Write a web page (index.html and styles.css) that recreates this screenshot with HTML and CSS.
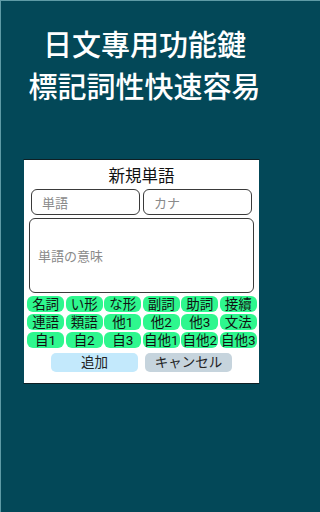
FILE: index.html
```html
<!DOCTYPE html>
<html lang="ja">
<head>
<meta charset="utf-8">
<link rel="stylesheet" href="styles.css">
</head>
<body>
<div class="screen">
  <header class="headline">
    <div class="line">日文專用功能鍵</div>
    <div class="line">標記詞性快速容易</div>
  </header>
  <section class="card">
    <div class="card-title">新規単語</div>
    <div class="field-row">
      <div class="field">単語</div>
      <div class="field">カナ</div>
    </div>
    <div class="field meaning">単語の意味</div>
    <div class="chips">
      <span class="chip">名詞</span><span class="chip">い形</span><span class="chip">な形</span><span class="chip">副詞</span><span class="chip">助詞</span><span class="chip">接續</span>
      <span class="chip">連語</span><span class="chip">類語</span><span class="chip">他1</span><span class="chip">他2</span><span class="chip">他3</span><span class="chip">文法</span>
      <span class="chip">自1</span><span class="chip">自2</span><span class="chip">自3</span><span class="chip">自他1</span><span class="chip">自他2</span><span class="chip">自他3</span>
    </div>
    <div class="actions">
      <span class="btn btn-add">追加</span>
      <span class="btn btn-cancel">キャンセル</span>
    </div>
  </section>
</div>
</body>
</html>
```

FILE: styles.css
```css
html, body {
  margin: 0;
  padding: 0;
  background: #034858;
}
body {
  height: 512px;
  overflow: hidden;
  font-family: Roboto, "Noto Sans CJK JP", sans-serif;
}
.screen {
  box-sizing: border-box;
  height: 512px;
  border-top: 1px solid #5e9ba6;
  border-left: 1px solid #5e9ba6;
  background: #034858;
}
.headline {
  width: 287px;
  padding-top: 21px;
  text-align: center;
  color: #ffffff;
  font-family: "Noto Sans CJK TC", sans-serif;
  font-weight: 500;
  font-size: 29px;
  line-height: 42px;
}
.card {
  box-sizing: border-box;
  margin: 53px 0 0 22px;
  width: 237px;
  height: 225px;
  background: #ffffff;
  border: 1px solid #0e1f24;
  border-left-color: #034858;
  border-right-color: #034858;
  display: flex;
  flex-direction: column;
}
.card-title {
  padding-top: 7px;
  text-align: center;
  font-size: 16.5px;
  line-height: 20px;
  color: #111;
}
.field-row {
  display: flex;
  gap: 3px;
  margin: 2px 7px 0 7px;
}
.field {
  box-sizing: border-box;
  flex: 1;
  height: 26px;
  border: 1.5px solid #3a3a3a;
  border-radius: 6px;
  padding-left: 10px;
  display: flex;
  align-items: center;
  color: #8a8a8a;
  font-size: 13px;
}
.meaning {
  flex: none;
  margin: 3px 5px 0 5px;
  height: 75px;
  padding-left: 8px;
}
.chips {
  margin: 3px 2px 0 3px;
  display: grid;
  grid-template-columns: repeat(6, 1fr);
  column-gap: 1.3px;
  row-gap: 2px;
}
.chip {
  height: 16px;
  border-radius: 6px;
  background: #2ef78e;
  color: #111;
  font-size: 13.5px;
  line-height: 16px;
  text-align: center;
  white-space: nowrap;
}
.actions {
  display: flex;
  justify-content: center;
  gap: 7px;
  margin-top: 5px;
}
.btn {
  width: 87px;
  height: 19px;
  border-radius: 5px;
  font-size: 13.5px;
  line-height: 19px;
  text-align: center;
  color: #222;
}
.btn-add {
  background: #c3e9fc;
}
.btn-cancel {
  background: #c6d4dd;
}
```
